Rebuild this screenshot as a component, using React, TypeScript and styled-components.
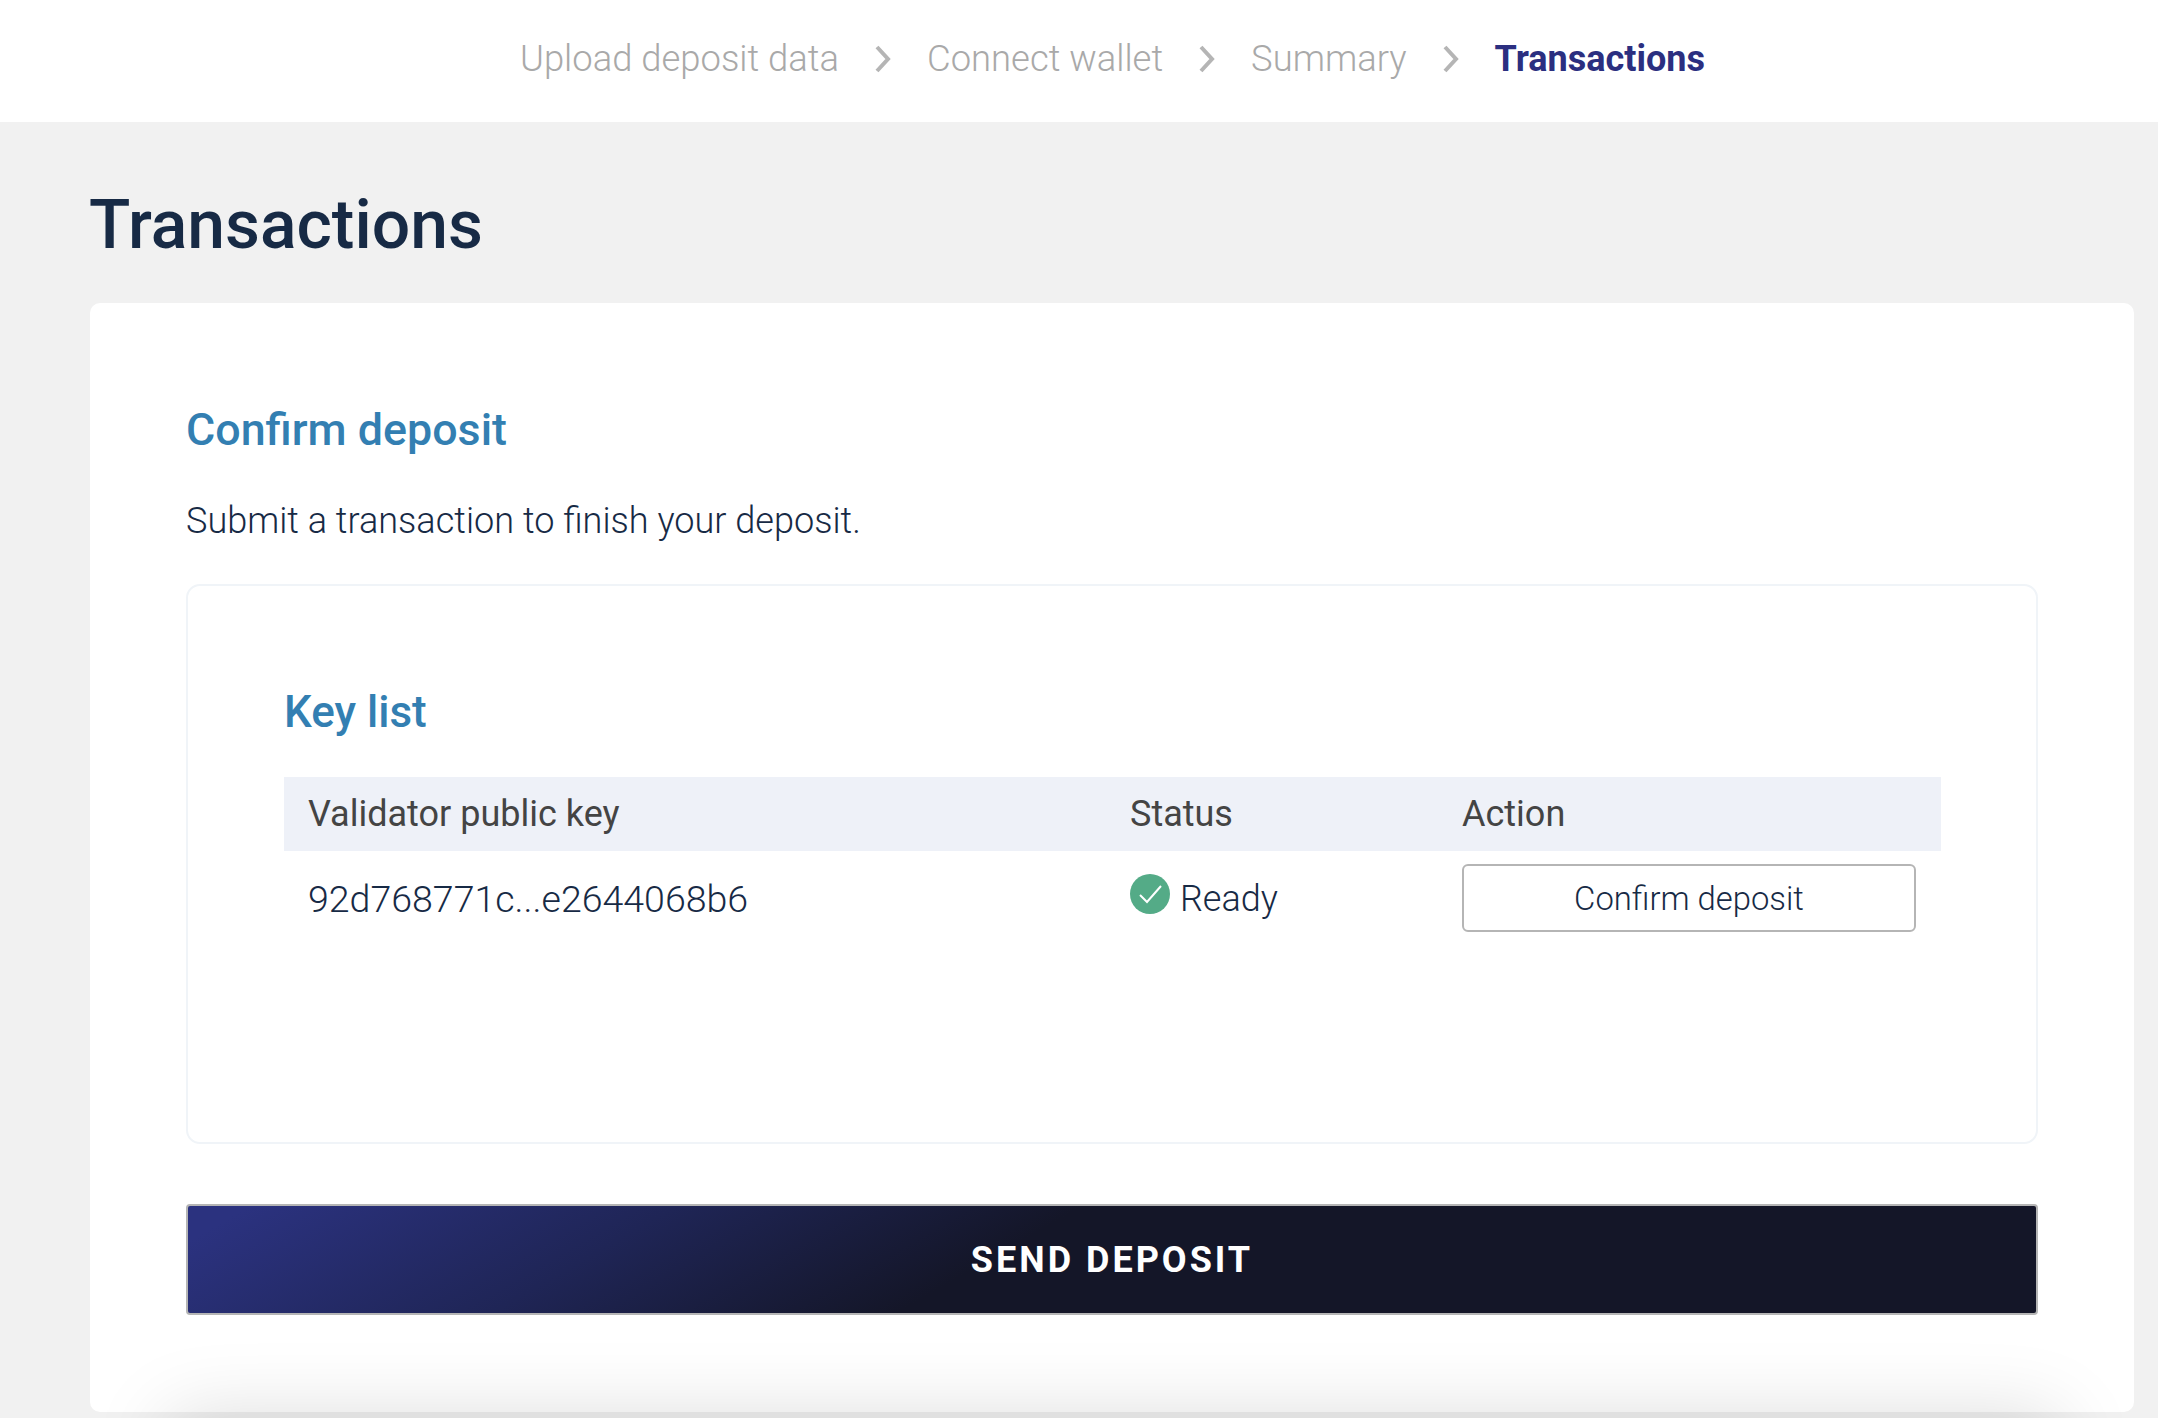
import React from "react";
import styled, { createGlobalStyle } from "styled-components";

const GlobalStyle = createGlobalStyle`
    html, body {
        margin: 0;
        padding: 0;
        height: 100%;
        overflow: hidden;
        background: #f1f1f1;
        font-family: Roboto, "Liberation Sans", sans-serif;
    }
    * {
        box-sizing: border-box;
    }
`;

const TopBar = styled.nav`
    height: 122px;
    background: #ffffff;
    display: flex;
    align-items: center;
    padding: 0 0 4px 520px;
`;

const Step = styled.span<{ $active?: boolean }>`
    font-size: ${props => (props.$active ? "36px" : "36.4px")};
    line-height: 44px;
    font-weight: ${props => (props.$active ? 700 : 300)};
    color: ${props => (props.$active ? "#2b2f80" : "#a9a9a9")};
`;

const Chevron = styled.svg`
    width: 20px;
    height: 28px;
    margin: 0 34px;
    fill: none;
    stroke: #b5b5b5;
    stroke-width: 4;
`;

const Content = styled.main`
    padding: 0 24px 0 90px;
`;

const PageTitle = styled.h1`
    margin: 0 0 0 -1px;
    height: 181px;
    padding-top: 67px;
    font-size: 67.8px;
    line-height: 72px;
    font-weight: 500;
    color: #172a45;
`;

const Card = styled.section`
    background: #ffffff;
    border-radius: 10px;
    height: 1109px;
    padding: 101px 96px 0;
`;

const SectionTitle = styled.h2`
    margin: 0;
    font-size: 44.8px;
    line-height: 52px;
    font-weight: 500;
    color: #337fb2;
`;

const TableTitle = styled(SectionTitle)`
    font-size: 44px;
`;

const Description = styled.p`
    margin: 41px 0 0;
    font-size: 36.1px;
    line-height: 48px;
    font-weight: 300;
    color: #172a45;
`;

const KeyBox = styled.div`
    margin-top: 39px;
    height: 560px;
    border: 2px solid #f0f4f8;
    border-radius: 14px;
    padding: 100px 95px 0 96px;
`;

const KeyTable = styled.div`
    margin-top: 39px;
`;

const TableRow = styled.div<{ $header?: boolean }>`
    display: grid;
    grid-template-columns: 822px 332px 1fr;
    align-items: center;
    padding: 0 25px 0 24px;
    height: ${props => (props.$header ? "74px" : "94px")};
    background: ${props => (props.$header ? "#eef1f8" : "transparent")};
    color: ${props => (props.$header ? "#444444" : "#172a45")};
    font-size: 36px;
    font-weight: ${props => (props.$header ? 400 : 300)};
    line-height: 44px;
`;

const HeaderCell = styled.div``;

const KeyCell = styled.div`
    font-size: 37.5px;
    padding-top: 2px;
`;

const StatusCell = styled.div`
    display: flex;
    align-items: center;
    gap: 10px;
    padding-top: 2px;
`;

const StatusIcon = styled.svg`
    width: 40px;
    height: 40px;
    margin-top: -10px;
`;

const ActionButton = styled.button`
    height: 68px;
    width: 100%;
    padding-top: 2px;
    background: #ffffff;
    border: 2px solid #b5b5b5;
    border-radius: 6px;
    color: #172a45;
    font-family: inherit;
    font-size: 32.8px;
    font-weight: 300;
`;

const SendButton = styled.button`
    display: block;
    width: 100%;
    height: 111px;
    margin-top: 60px;
    border: 2px solid #b5b5b5;
    border-radius: 4px;
    background: linear-gradient(150deg, #2b327f 3%, #1f2556 24%, #141628 44%, #141628 100%);
    color: #ffffff;
    font-family: inherit;
    font-size: 36px;
    font-weight: 700;
    letter-spacing: 3px;
    text-transform: uppercase;
`;

const BottomShade = styled.div`
    position: fixed;
    top: 1418px;
    left: 170px;
    right: 100px;
    height: 200px;
    box-shadow: 0 0 80px rgba(0, 0, 0, 0.15);
`;

const steps = ["Upload deposit data", "Connect wallet", "Summary"];

const App = () => {
    return (
        <>
            <GlobalStyle />
            <TopBar>
                {steps.map(step => (
                    <React.Fragment key={step}>
                        <Step>{step}</Step>
                        <Chevron viewBox="0 0 20 28">
                            <path d="M4 2 L15 14 L4 26" />
                        </Chevron>
                    </React.Fragment>
                ))}
                <Step $active>Transactions</Step>
            </TopBar>
            <Content>
                <PageTitle>Transactions</PageTitle>
                <Card>
                    <SectionTitle>Confirm deposit</SectionTitle>
                    <Description>Submit a transaction to finish your deposit.</Description>
                    <KeyBox>
                        <TableTitle>Key list</TableTitle>
                        <KeyTable>
                            <TableRow $header>
                                <HeaderCell>Validator public key</HeaderCell>
                                <HeaderCell>Status</HeaderCell>
                                <HeaderCell>Action</HeaderCell>
                            </TableRow>
                            <TableRow>
                                <KeyCell>92d768771c...e2644068b6</KeyCell>
                                <StatusCell>
                                    <StatusIcon viewBox="0 0 40 40">
                                        <circle cx="20" cy="20" r="20" fill="#54ab87" />
                                        <path
                                            d="M10 21 L17 28 L31 12"
                                            fill="none"
                                            stroke="#ffffff"
                                            strokeWidth="2"
                                        />
                                    </StatusIcon>
                                    Ready
                                </StatusCell>
                                <ActionButton>Confirm deposit</ActionButton>
                            </TableRow>
                        </KeyTable>
                    </KeyBox>
                    <SendButton>Send deposit</SendButton>
                </Card>
            </Content>
            <BottomShade />
        </>
    );
};

export default App;
